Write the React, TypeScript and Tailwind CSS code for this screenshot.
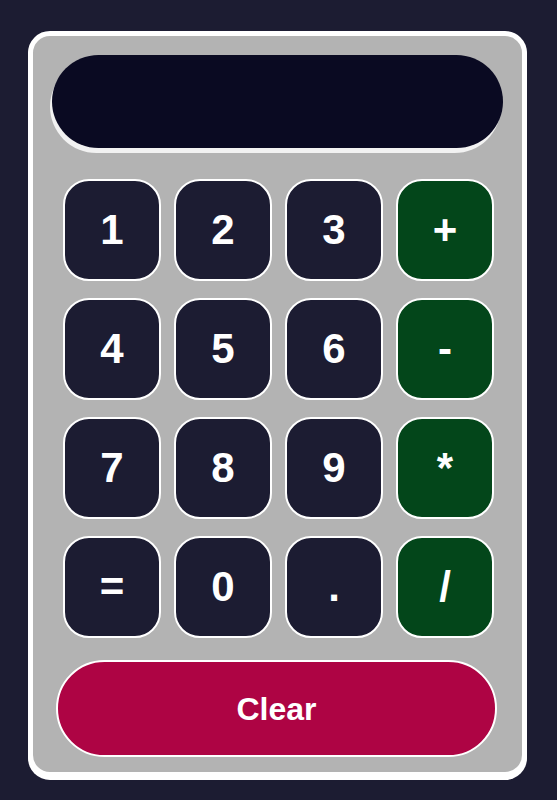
import React from "react";

const keys = [
  ["1", "2", "3", "+"],
  ["4", "5", "6", "-"],
  ["7", "8", "9", "*"],
  ["=", "0", ".", "/"],
];

const ops = new Set(["+", "-", "*", "/"]);

export default function App() {
  return (
    <div
      className="min-h-[800px] w-full bg-[#1c1c32] pl-[28px] pt-[31px]"
      style={{ fontFamily: '"Liberation Sans", Arial, sans-serif' }}
    >
      <div className="flex h-[746px] w-[499px] flex-col rounded-[22px] border-[5px] border-white bg-[#b3b3b3] shadow-[0_3px_0_#fff]">
        <div className="ml-[19px] mt-[19px] h-[93px] w-[451px] rounded-full bg-[#0a0a22] shadow-[-2px_5px_0_#f2f2f2]" />

        <div className="ml-[30px] mt-[31px] grid grid-cols-[repeat(4,98px)] gap-x-[13px] gap-y-[17px]">
          {keys.flat().map((k) => (
            <button
              key={k}
              type="button"
              className={
                "flex h-[102px] w-[98px] items-center justify-center rounded-[26px] border-2 border-white text-[42px] font-bold leading-none text-white " +
                (ops.has(k) ? "bg-[#03461a]" : "bg-[#1c1c32]")
              }
            >
              {k}
            </button>
          ))}
        </div>

        <button
          type="button"
          className="ml-[23px] mt-[22px] flex h-[97px] w-[441px] items-center justify-center rounded-full border-2 border-white bg-[#ae0444] text-[32px] font-bold text-white"
        >
          Clear
        </button>
      </div>
    </div>
  );
}
